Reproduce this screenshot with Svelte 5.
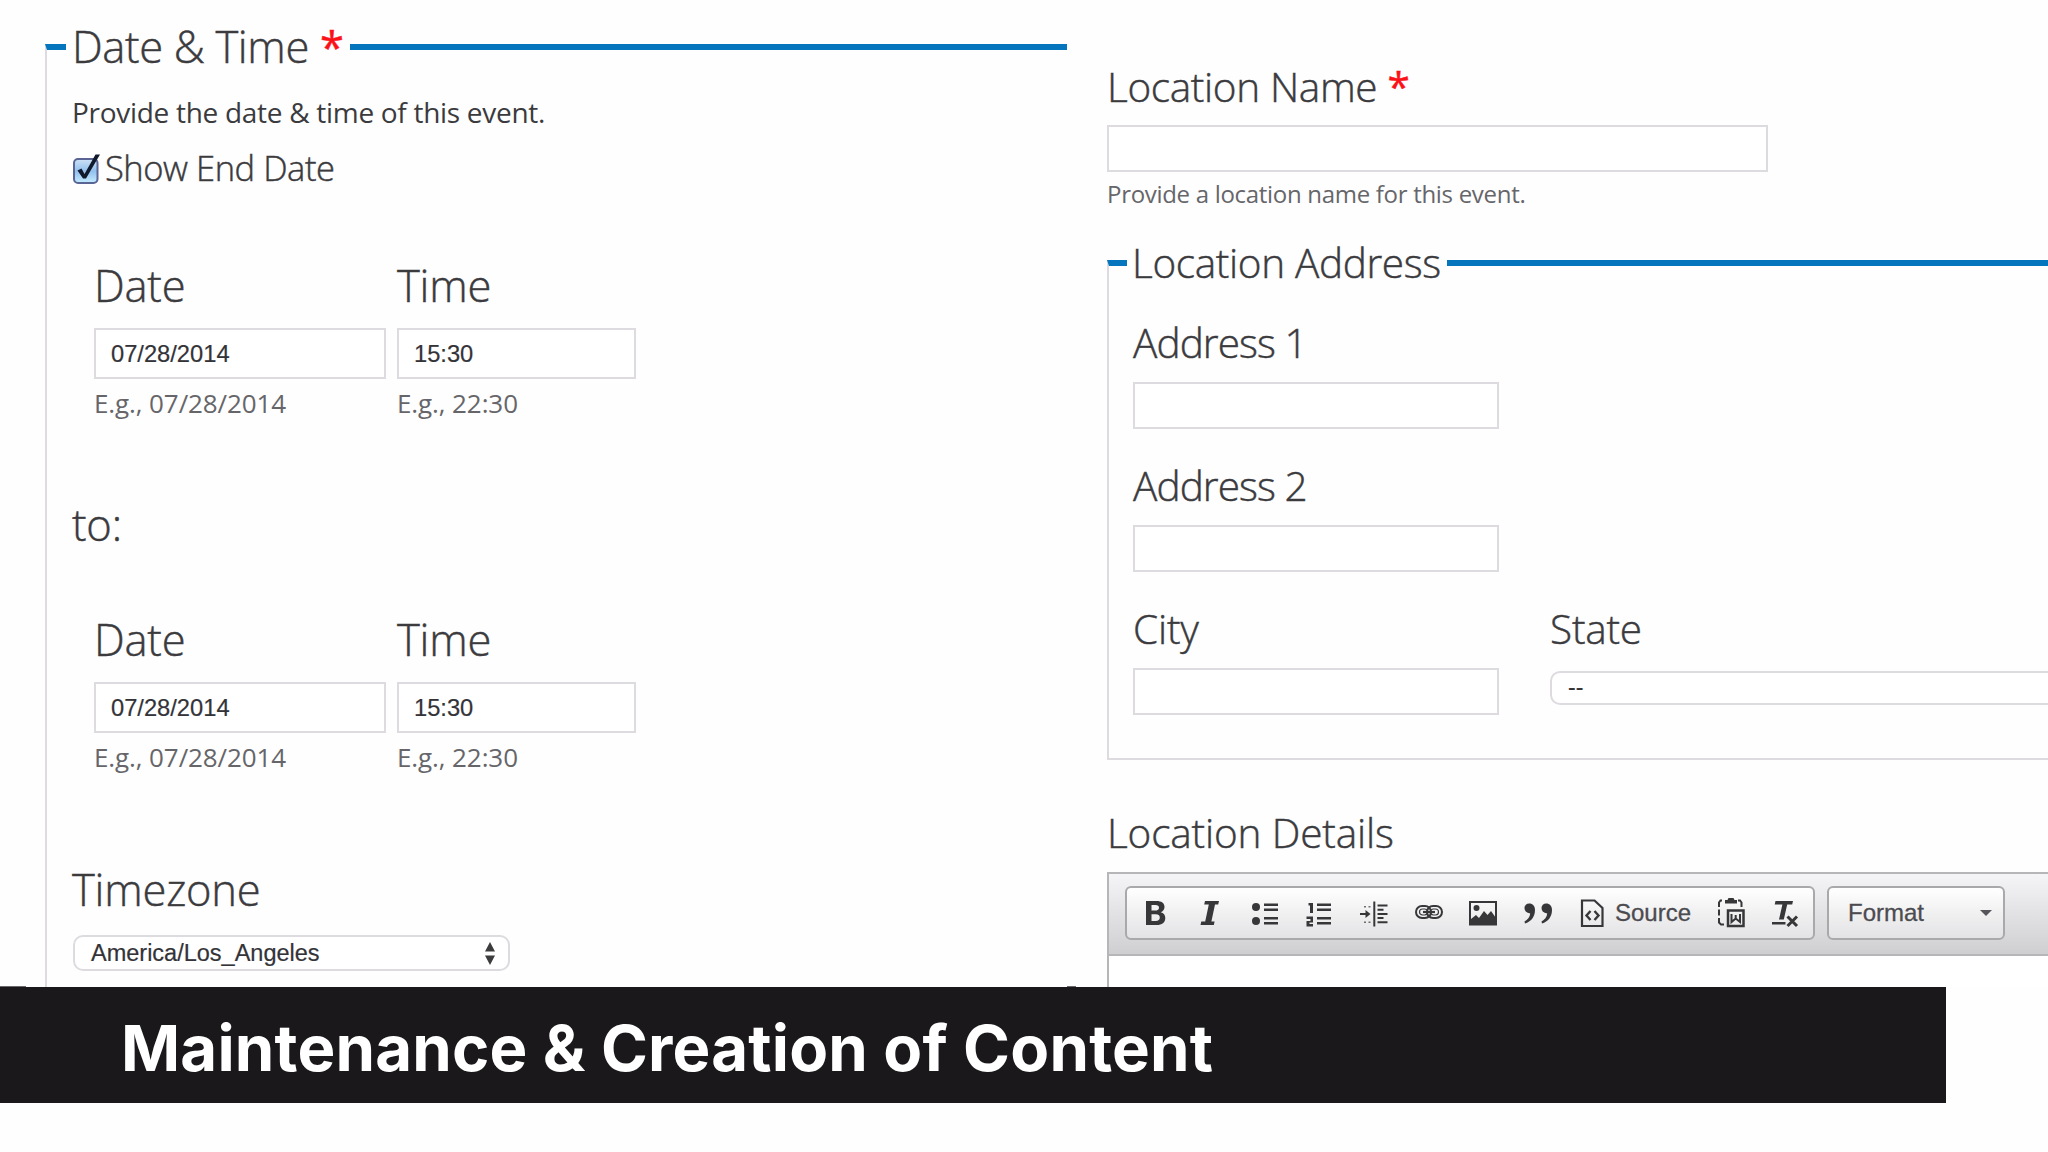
<script>
  const rows = [
    { date: '07/28/2014', time: '15:30' },
    { date: '07/28/2014', time: '15:30' }
  ];
</script>

{#snippet when(row)}
  <div class="when">
    <div>
      <div class="label">Date</div>
      <div class="box">{row.date}</div>
      <div class="eg">E.g., 07/28/2014</div>
    </div>
    <div>
      <div class="label">Time</div>
      <div class="box">{row.time}</div>
      <div class="eg">E.g., 22:30</div>
    </div>
  </div>
{/snippet}

<main>
  <div class="forms">
    <fieldset class="dates">
      <legend>Date &amp; Time <span class="req">*</span></legend>
      <p class="intro">Provide the date &amp; time of this event.</p>
      <div class="check">
        <svg width="30" height="32" viewBox="0 0 30 32">
          <defs>
            <linearGradient id="cb" x1="0" y1="0" x2="0" y2="1">
              <stop offset="0" stop-color="#cfe2f6" />
              <stop offset=".5" stop-color="#92c0ee" />
              <stop offset="1" stop-color="#c4ecff" />
            </linearGradient>
          </defs>
          <rect x="2" y="7" width="23.500" height="24" rx="4" fill="url(#cb)" stroke="#5a6596" stroke-width="2" />
          <path d="M5.500 18.500 9.500 16.500l3 5.500L23.500 2.500h4.500L14 26.500h-3z" fill="#101a2c" />
        </svg>
        <span>Show End Date</span>
      </div>
      {@render when(rows[0])}
      <div class="label to">to:</div>
      {@render when(rows[1])}
      <div class="label tz">Timezone</div>
      <div class="select zone">
        <span>America/Los_Angeles</span>
        <svg width="12" height="23" viewBox="0 0 12 23"><path d="M6 0 11 9.500H1zM6 23 1 13.500h10z" fill="#3c3c3e" /></svg>
      </div>
    </fieldset>

    <section class="location">
      <div class="label">Location Name <span class="req">*</span></div>
      <div class="box name"></div>
      <p class="help">Provide a location name for this event.</p>

      <fieldset class="address">
        <legend>Location Address</legend>
        <div class="label tight">Address 1</div>
        <div class="box"></div>
        <div class="label tight">Address 2</div>
        <div class="box"></div>
        <div class="pair">
          <div>
            <div class="label">City</div>
            <div class="box"></div>
          </div>
          <div class="state">
            <div class="label">State</div>
            <div class="select">--</div>
          </div>
        </div>
      </fieldset>

      <div class="label details">Location Details</div>
      <div class="editor">
        <div class="toolbar">
          <div class="group">
            <span class="cell"><svg width="30" height="32" viewBox="0 0 30 32"><path fill-rule="evenodd" d="M6 4h10.500c5 0 8 2 8 6 0 2.700-1.500 4.500-3.800 5.300 3 .7 4.600 2.700 4.600 5.700 0 4.500-3.300 7-8.600 7H6zm5.500 4v5.500h3.800c2.300 0 3.700-.9 3.700-2.800S17.700 8 15.500 8zm0 9.300V24h4.300c2.600 0 4-1.200 4-3.400s-1.500-3.300-4.200-3.300z" /></svg></span>
            <span class="cell"><svg width="30" height="32" viewBox="0 0 30 32"><path d="M10 4h14l-.8 3.500h-3.200l-3.600 17h3.200l-.8 3.500H5.500l.8-3.500h3.900l3.600-17H9.200z" /></svg></span>
            <span class="cell"><svg width="30" height="32" viewBox="0 0 30 32"><circle cx="6" cy="10" r="4" /><circle cx="6" cy="24" r="4" /><path d="M14 6.500h14v2.500H14zm0 5h14V14H14zm0 8.500h14v2.500H14zm0 5h14v2.500H14z" /></svg></span>
            <span class="cell"><svg width="30" height="32" viewBox="0 0 30 32"><path d="M4.500 6h4.500v10H6V8.500H4.500zM2.500 19.500h6.500v6H5.500V27H9v2.500H2.500V24h4v-2h-4zM13 6.500h14v2.500H13zm0 5h14V14H13zm0 8.500h14v2.500H13zm0 5h14v2.500H13z" /></svg></span>
            <span class="cell"><svg width="30" height="32" viewBox="0 0 30 32"><path d="M14.300 4.500h2v25h-2zM18.500 7.500h10v2h-10zm0 4.200h6v2h-6zm0 4.200h10v2h-10zm0 4.200h6v2h-6zm0 4.200h10v2h-10zM1 16h5.500v-3l5 4-5 4v-3H1z" /><path d="M5 9h2v1.500H5zm4.500 0h2v1.500h-2zM5 24.500h2V26H5zm4.500 0h2V26h-2z" opacity=".7" /></svg></span>
            <span class="cell"><svg width="30" height="32" viewBox="0 0 30 32"><g fill="none" stroke="#37373a"><rect x="2" y="9" width="15" height="12" rx="6" stroke-width="2" /><rect x="13" y="9" width="15" height="12" rx="6" stroke-width="2" /><rect x="5.500" y="12" width="8" height="6" rx="3" stroke-width="1.200" /><rect x="16.500" y="12" width="8" height="6" rx="3" stroke-width="1.200" /><path d="M9 15h12" stroke-width="2.200" /></g></svg></span>
            <span class="cell"><svg width="30" height="32" viewBox="0 0 30 32"><path fill-rule="evenodd" d="M1 4h28v24.500H1zm2 2v20.500h24V6z" /><circle cx="8.500" cy="11" r="3" /><path d="M3 27v-5l5-4 3 3 5-7 3.500 4 3.500-4 5 7v6z" /></svg></span>
            <span class="cell"><svg width="30" height="32" viewBox="0 0 30 32"><path d="M1.500 11c0-2.700 2-4.500 4.700-4.500 3.500 0 5.800 2.500 5.800 6.500 0 7-4 11.500-10 13.500l-.5-2C4.500 23 7 20 7.200 16.500 3.500 16 1.500 14 1.500 11zM18.500 11c0-2.700 2-4.500 4.700-4.500 3.500 0 5.800 2.500 5.800 6.500 0 7-4 11.500-10 13.500l-.5-2c3-1.500 5.500-4.500 5.700-8-3.700-.5-5.700-2.500-5.700-5.500z" /></svg></span>
            <span class="cell source"><svg width="30" height="32" viewBox="0 0 30 32"><g fill="none" stroke="#37373a" stroke-width="2.200"><path d="M5 3.500h12.500l8 7.500v18H5z" /><path d="m13.500 14-4 4.500 4 4.500M17.500 14l4 4.500-4 4.500" stroke-width="2.400" /></g></svg><span>Source</span></span>
            <span class="cell"><svg width="30" height="32" viewBox="0 0 30 32"><g fill="none" stroke="#37373a" stroke-width="2"><path d="M7 3.500H5.500l-1.500 2V10m0 2.500v6m0 2.500v4.500l2 2h3M23 3.500h2l1.500 2V10" /><rect x="13" y="13.500" width="15.500" height="15.500" stroke-width="2.500" /><path d="M16.500 17v8l4.200-3.500L25 25v-8M20.700 18v4" stroke-width="2" /></g><path d="M10 3h2.500l1-2h5l1 2H22v3.500H10z" /></svg></span>
            <span class="cell"><svg width="30" height="32" viewBox="0 0 30 32"><path d="M5.500 4H23l-.8 3.500h-5L13.800 22.500H9L12.400 7.500H4.700zM2 25h13.500v2.500H2z" /><path d="m17.500 19.500 9.500 9.500m0-9.500-9.500 9.500" fill="none" stroke="#37373a" stroke-width="3" /></svg></span>
          </div>
          <div class="group format">
            <span>Format</span>
            <svg width="12" height="6" viewBox="0 0 12 6"><path d="M0 0h12L6 6z" fill="#55555a" /></svg>
          </div>
        </div>
      </div>
    </section>
  </div>

  <h1 class="banner">Maintenance &amp; Creation of Content</h1>
</main>

<style>
  :global(body) {
    margin: 0;
    background: #fefefe;
  }
  main {
    position: relative;
    width: 2048px;
    height: 1152px;
    overflow: hidden;
    box-sizing: border-box;
    background: #fefefe;
    color: #3b3b3e;
    font-family: 'Open Sans', 'Noto Sans', sans-serif;
  }
  main * {
    box-sizing: border-box;
  }
  p,
  h1 {
    margin: 0;
  }
  span,
  div,
  p,
  legend {
    white-space: nowrap;
  }
  svg {
    display: block;
    flex: none;
  }
  .forms {
    display: grid;
    grid-template-columns: 1022px 1fr;
    column-gap: 40px;
    height: 987px;
    padding-left: 45px;
    overflow: hidden;
  }
  fieldset {
    margin: 0;
    min-width: 0;
    border: 0 solid #dedbe0;
    border-top: 6px solid #0575bd;
    border-left-width: 2px;
  }
  legend,
  .label,
  .check {
    font-weight: 300;
    -webkit-text-stroke: 0.45px currentColor;
  }
  legend {
    line-height: 62px;
    padding: 0 0 0 6px;
    letter-spacing: -0.35px;
  }
  .req {
    color: #fb1118;
    font-weight: 400;
  }
  .label {
    line-height: 60px;
    letter-spacing: -0.2px;
  }
  .box {
    display: flex;
    align-items: center;
    border: 2px solid #dedbe0;
    background: #fff;
  }
  .select {
    display: flex;
    align-items: center;
    border: 2px solid #dedbe0;
    border-radius: 10px;
    background: #fff;
  }
  .box,
  .select {
    font-family: 'Liberation Sans', Arial, sans-serif;
    color: #333338;
    -webkit-text-stroke: 0.2px currentColor;
  }
  .dates {
    height: 1080px;
    margin-top: 16px;
    padding: 0 0 0 25px;
    font-size: 43.5px;
  }
  .dates legend {
    width: 284px;
    margin-left: -6px;
  }
  .intro {
    margin-top: 14px;
    font-size: 28px;
    line-height: 40px;
    letter-spacing: -0.29px;
  }
  .check {
    display: flex;
    align-items: center;
    gap: 3px;
    height: 50px;
    margin-top: 11px;
    font-size: 34.5px;
    line-height: 50px;
    letter-spacing: -0.45px;
  }
  .when {
    display: grid;
    grid-template-columns: 292px 239px;
    column-gap: 11px;
    margin: 63px 0 0 22px;
  }
  .when .box {
    height: 51px;
    margin-top: 12px;
    padding: 1px 0 0 15px;
    font-size: 23.7px;
  }
  .when + .to {
    margin-top: 72px;
  }
  .eg {
    margin-top: 4px;
    font-size: 26px;
    line-height: 40px;
    color: #66666a;
    letter-spacing: -0.1px;
  }
  .to + .when {
    margin-top: 55px;
  }
  .tz {
    margin-top: 83px;
  }
  .zone {
    justify-content: space-between;
    width: 437px;
    height: 36px;
    margin: 15px 0 0 1px;
    padding: 1px 12px 0 16px;
    font-size: 23.5px;
  }
  .location {
    padding-top: 57px;
    font-size: 40.5px;
  }
  .location > .label {
    letter-spacing: -0.35px;
  }
  .box.name {
    width: 661px;
    height: 47px;
    margin-top: 8px;
  }
  .help {
    margin-top: 2px;
    font-size: 24px;
    line-height: 40px;
    color: #66666a;
    letter-spacing: -0.3px;
  }
  .address {
    height: 528px;
    margin-top: 18px;
    padding: 0 0 0 24px;
    border-bottom-width: 2px;
  }
  .address legend {
    width: 320px;
    margin-left: -6px;
    padding-left: 5px;
  }
  .address legend + .label {
    margin-top: 19px;
  }
  .address .tight {
    letter-spacing: -0.9px;
  }
  .address .box {
    width: 366px;
    height: 47px;
    margin-top: 9px;
  }
  .address .box + .label {
    margin-top: 27px;
  }
  .pair {
    display: grid;
    grid-template-columns: 366px 1fr;
    column-gap: 51px;
    margin-top: 27px;
  }
  .state .select {
    width: 520px;
    height: 34px;
    margin-top: 12px;
    padding: 0 0 2px 16px;
    font-size: 23px;
  }
  .location > .details {
    margin-top: 43px;
    letter-spacing: -0.15px;
  }
  .editor {
    height: 200px;
    margin-top: 9px;
    border: 2px solid #b6b6b8;
    border-right: 0;
    background: #fff;
  }
  .toolbar {
    display: flex;
    gap: 12px;
    height: 82px;
    padding: 12px 0 0 16px;
    border-bottom: 2px solid #b6b6b8;
    background: linear-gradient(#f5f4f6, #cfcfd1);
  }
  .group {
    display: flex;
    align-items: center;
    width: 690px;
    height: 54px;
    padding: 0 1px;
    border: 2px solid #a9a8ab;
    border-radius: 6px;
    background: linear-gradient(#fff, #e3e2e4);
    font-family: 'Liberation Sans', Arial, sans-serif;
    font-size: 24px;
    line-height: 30px;
    color: #4b4b50;
    fill: #37373a;
    -webkit-text-stroke: 0.3px currentColor;
  }
  .cell {
    display: flex;
    justify-content: center;
    align-items: center;
    width: 54.7px;
    flex: none;
  }
  .cell svg {
    margin-bottom: 1px;
  }
  .source {
    width: 137px;
    gap: 8px;
  }
  .format {
    justify-content: space-between;
    width: 178px;
    padding: 0 11px 0 19px;
  }
  .banner {
    position: absolute;
    left: 0;
    top: 987px;
    width: 1946px;
    height: 116px;
    padding-left: 121px;
    background: #1a181b;
    color: #fff;
    font-family: Inter, sans-serif;
    font-weight: 700;
    font-size: 63.5px;
    letter-spacing: 0.2px;
    line-height: 121px;
  }
  /* slivers of the fields that sit behind the banner */
  .banner::before,
  .banner::after {
    content: '';
    position: absolute;
    top: -1px;
    left: 0;
    width: 26px;
    height: 1px;
    background: #6a686b;
  }
  .banner::after {
    left: 1067px;
    width: 9px;
  }
</style>
